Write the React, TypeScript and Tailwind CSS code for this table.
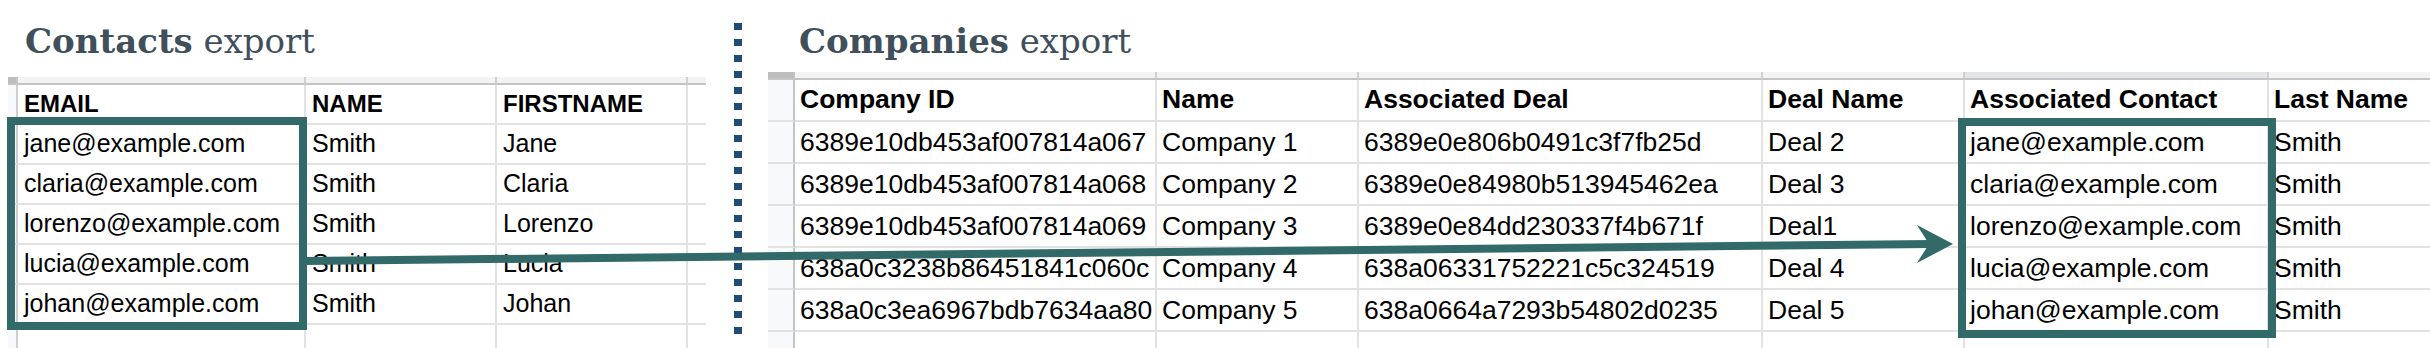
import React from 'react';

const contacts = [
  ['jane@example.com', 'Smith', 'Jane'],
  ['claria@example.com', 'Smith', 'Claria'],
  ['lorenzo@example.com', 'Smith', 'Lorenzo'],
  ['lucia@example.com', 'Smith', 'Lucia'],
  ['johan@example.com', 'Smith', 'Johan'],
];

const companies = [
  ['6389e10db453af007814a067', 'Company 1', '6389e0e806b0491c3f7fb25d', 'Deal 2', 'jane@example.com', 'Smith'],
  ['6389e10db453af007814a068', 'Company 2', '6389e0e84980b513945462ea', 'Deal 3', 'claria@example.com', 'Smith'],
  ['6389e10db453af007814a069', 'Company 3', '6389e0e84dd230337f4b671f', 'Deal1', 'lorenzo@example.com', 'Smith'],
  ['638a0c3238b86451841c060c', 'Company 4', '638a06331752221c5c324519', 'Deal 4', 'lucia@example.com', 'Smith'],
  ['638a0c3ea6967bdb7634aa80', 'Company 5', '638a0664a7293b54802d0235', 'Deal 5', 'johan@example.com', 'Smith'],
];

const sheetFont = { fontFamily: '"Liberation Sans", Arial, sans-serif' };

function Title({ bold, rest }: { bold: string; rest: string }) {
  return (
    <div
      className="text-[34px] leading-[34px] text-[#3f505c] whitespace-nowrap"
      style={{ fontFamily: '"DejaVu Serif", "Liberation Serif", serif' }}
    >
      <span className="font-bold">{bold}</span> {rest}
    </div>
  );
}

export default function App() {
  return (
    <div className="relative flex h-[348px] w-[2430px] overflow-hidden bg-white" style={sheetFont}>
      {/* Contacts export */}
      <div className="flex w-[734px] shrink-0 flex-col pl-[8px]">
        <div className="h-[77px] shrink-0 pl-[17px] pt-[24px]">
          <Title bold="Contacts" rest="export" />
        </div>
        <div className="relative w-[698px] shrink-0">
          <div className="grid grid-cols-[10px_288px_191px_191px_18px]">
            {/* sheet column header strip */}
            <div className="h-[8px] border-b-2 border-r-2 border-[#c4c4c4] bg-[#bdbdbd]" />
            <div className="h-[8px] border-b-2 border-r-2 border-b-[#c4c4c4] border-r-[#d0d0d0] bg-[#f3f3f3]" />
            <div className="h-[8px] border-b-2 border-r-2 border-b-[#c4c4c4] border-r-[#d0d0d0] bg-[#f3f3f3]" />
            <div className="h-[8px] border-b-2 border-r-2 border-b-[#c4c4c4] border-r-[#d0d0d0] bg-[#f3f3f3]" />
            <div className="h-[8px] border-b-2 border-[#c4c4c4] bg-[#f3f3f3]" />

            {/* header row */}
            <div className="h-[40px] border-b-2 border-r-2 border-b-[#e2e2e2] border-r-[#cfcfcf] bg-[#f8f9fa]" />
            {['EMAIL', 'NAME', 'FIRSTNAME'].map((h) => (
              <div key={h} className="flex h-[40px] items-center border-b-2 border-r-2 border-[#e2e2e2] pl-[6px] text-[24px] font-bold text-black">
                {h}
              </div>
            ))}
            <div className="h-[40px] border-b-2 border-[#e2e2e2]" />

            {contacts.map((row) => (
              <React.Fragment key={row[0]}>
                <div className="h-[40px] border-b-2 border-r-2 border-b-[#e2e2e2] border-r-[#cfcfcf] bg-[#f8f9fa]" />
                {row.map((c, i) => (
                  <div key={i} className="flex h-[40px] items-center whitespace-nowrap border-b-2 border-r-2 border-[#e2e2e2] pl-[6px] text-[25px] text-black">
                    {c}
                  </div>
                ))}
                <div className="h-[40px] border-b-2 border-[#e2e2e2]" />
              </React.Fragment>
            ))}

            {/* partial empty row */}
            <div className="h-[40px] border-r-2 border-[#cfcfcf] bg-[#f8f9fa]" />
            <div className="h-[40px] border-r-2 border-[#e2e2e2]" />
            <div className="h-[40px] border-r-2 border-[#e2e2e2]" />
            <div className="h-[40px] border-r-2 border-[#e2e2e2]" />
            <div className="h-[40px]" />
          </div>

          {/* highlighted email column */}
          <div className="absolute left-[-1px] top-[40px] h-[213px] w-[300px] border-[8px] border-[#326a6a]" />
        </div>
      </div>

      {/* dotted divider */}
      <div className="mt-[23px] h-[312px] w-[8px] shrink-0 bg-[repeating-linear-gradient(to_bottom,#1f4b76_0px,#1f4b76_7px,transparent_7px,transparent_16px)]" />

      {/* Companies export */}
      <div className="flex min-w-0 flex-1 flex-col pl-[26px]">
        <div className="h-[72px] shrink-0 pl-[31px] pt-[24px]">
          <Title bold="Companies" rest="export" />
        </div>
        <div className="relative shrink-0">
          <div className="grid grid-cols-[27px_362px_202px_404px_202px_304px_1fr]">
            <div className="h-[8px] border-b-2 border-r-2 border-[#c4c4c4] bg-[#bdbdbd]" />
            <div className="h-[8px] border-b-2 border-r-2 border-b-[#c4c4c4] border-r-[#d0d0d0] bg-[#f3f3f3]" />
            <div className="h-[8px] border-b-2 border-r-2 border-b-[#c4c4c4] border-r-[#d0d0d0] bg-[#f3f3f3]" />
            <div className="h-[8px] border-b-2 border-r-2 border-b-[#c4c4c4] border-r-[#d0d0d0] bg-[#f3f3f3]" />
            <div className="h-[8px] border-b-2 border-r-2 border-b-[#c4c4c4] border-r-[#d0d0d0] bg-[#f3f3f3]" />
            <div className="h-[8px] border-b-2 border-r-2 border-b-[#c4c4c4] border-r-[#d0d0d0] bg-[#e3e5e8]" />
            <div className="h-[8px] border-b-2 border-[#c4c4c4] bg-[#f3f3f3]" />

            <div className="h-[42px] border-b-2 border-r-2 border-b-[#e2e2e2] border-r-[#c4c4c4] bg-[#f8f9fa]" />
            {['Company ID', 'Name', 'Associated Deal', 'Deal Name', 'Associated Contact', 'Last Name'].map((h, i) => (
              <div key={h} className={`flex h-[42px] items-center whitespace-nowrap border-b-2 border-[#e2e2e2] pl-[5px] text-[26.5px] font-bold text-black ${i < 5 ? 'border-r-2' : ''}`}>
                {h}
              </div>
            ))}

            {companies.map((row) => (
              <React.Fragment key={row[0]}>
                <div className="h-[42px] border-b-2 border-r-2 border-b-[#e2e2e2] border-r-[#c4c4c4] bg-[#f8f9fa]" />
                {row.map((c, i) => (
                  <div key={i} className={`flex h-[42px] items-center whitespace-nowrap border-b-2 border-[#e2e2e2] pl-[5px] pt-[2px] text-[26.5px] text-black ${i < 5 ? 'border-r-2' : ''}`}>
                    {c}
                  </div>
                ))}
              </React.Fragment>
            ))}

            <div className="h-[42px] border-r-2 border-[#c4c4c4] bg-[#f8f9fa]" />
            <div className="h-[42px] border-r-2 border-[#e2e2e2]" />
            <div className="h-[42px] border-r-2 border-[#e2e2e2]" />
            <div className="h-[42px] border-r-2 border-[#e2e2e2]" />
            <div className="h-[42px] border-r-2 border-[#e2e2e2]" />
            <div className="h-[42px] border-r-2 border-[#e2e2e2]" />
            <div className="h-[42px]" />
          </div>

          {/* highlighted associated contact column */}
          <div className="absolute left-[1190px] top-[46px] h-[220px] w-[318px] border-[8px] border-[#326a6a]" />
        </div>
      </div>

      {/* connecting arrow */}
      <svg className="pointer-events-none absolute left-0 top-0" width="2430" height="348" viewBox="0 0 2430 348">
        <line x1="305" y1="261" x2="1932" y2="244" stroke="#326a6a" strokeWidth="8" />
        <path d="M1917 225 L1953 244 L1917 263 L1929 244 Z" fill="#326a6a" />
      </svg>
    </div>
  );
}
